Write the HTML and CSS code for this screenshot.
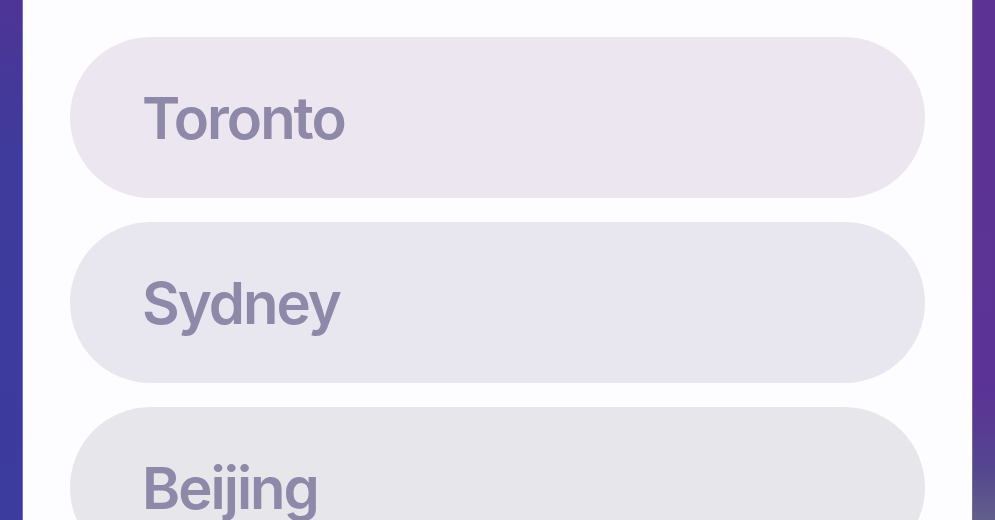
FILE: index.html
```html
<!DOCTYPE html>
<html>
<head>
<meta charset="utf-8">
<link rel="stylesheet" href="styles.css">
</head>
<body>
<div class="frame">
  <div class="side side-left"></div>
  <div class="panel">
    <div class="pill pill-1">Toronto</div>
    <div class="pill pill-2">Sydney</div>
    <div class="pill pill-3">Beijing</div>
  </div>
  <div class="side side-right"></div>
</div>
</body>
</html>
```
FILE: styles.css
```css
html, body {
  margin: 0;
  padding: 0;
  width: 995px;
  height: 520px;
  overflow: hidden;
  background: #fdfcfe;
}
.frame {
  display: flex;
  height: 520px;
  overflow: hidden;
}
.side {
  flex: none;
}
.side-left {
  width: 23px;
  background: linear-gradient(180deg, #4e3596 0%, #3e3b9c 30%, #3c3b9e 100%);
  box-shadow: inset -1px 0 0 #6f6cd0;
}
.side-right {
  width: 23px;
  background: linear-gradient(180deg, #5c3394 0%, #5b3396 75%, #54468f 90%, #625f8a 100%);
  box-shadow: inset 1px 0 0 #7a6a9a;
}
.panel {
  flex: 1;
  background: #fdfcfe;
  padding: 37px 47px 0 47px;
  display: flex;
  flex-direction: column;
  gap: 24px;
  overflow: hidden;
}
.pill {
  flex: none;
  height: 161px;
  border-radius: 81px;
  padding-left: 72px;
  display: flex;
  align-items: center;
  font-family: "Inter", sans-serif;
  font-size: 58px;
  font-weight: 600;
  color: #8e89a8;
  letter-spacing: -2px;
}
.pill-1 { background: #ebe6ef; }
.pill-2 { background: #e8e7ef; }
.pill-3 { background: #e7e6eb; }
```
